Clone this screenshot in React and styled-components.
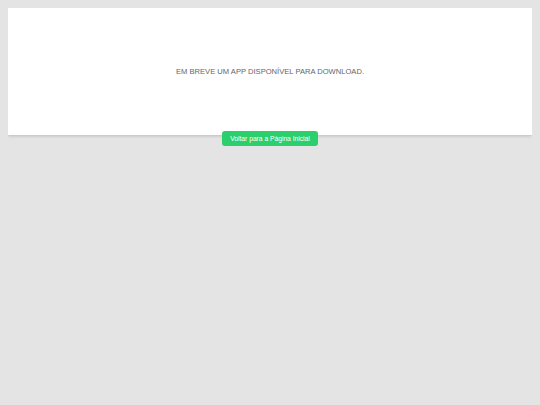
import React from 'react'
import styled, { createGlobalStyle } from 'styled-components'

const GlobalStyle = createGlobalStyle`
html, body {
    background:#e4e4e4;
}
body {
    margin:8px;
    font-family:"Liberation Sans", Arial, sans-serif;
}
`

const Page = styled.div`
display:flex;
flex-direction:column;
align-items:center;
`

const Card = styled.div`
width:100%;
height:127px;
background:#ffffff;
box-shadow:0 1px 3px rgba(0,0,0,0.18);
display:flex;
align-items:center;
justify-content:center;
`

const Message = styled.p`
margin:0;
font-size:7.6px;
color:#666666;
`

const BackButton = styled.button`
position:relative;
margin-top:-4px;
height:15px;
padding:0 8px;
border:none;
border-radius:3px;
background:#2bcf6b;
color:#ffffff;
font-family:"Liberation Sans", Arial, sans-serif;
font-size:6.7px;
cursor:pointer;
&:focus{
    outline:none;
}
`

const App = () => {
    return (
        <>
            <GlobalStyle />
            <Page>
                <Card>
                    <Message>EM BREVE UM APP DISPONÍVEL PARA DOWNLOAD.</Message>
                </Card>
                <BackButton>Voltar para a Página Inicial</BackButton>
            </Page>
        </>
    )
}

export default App
